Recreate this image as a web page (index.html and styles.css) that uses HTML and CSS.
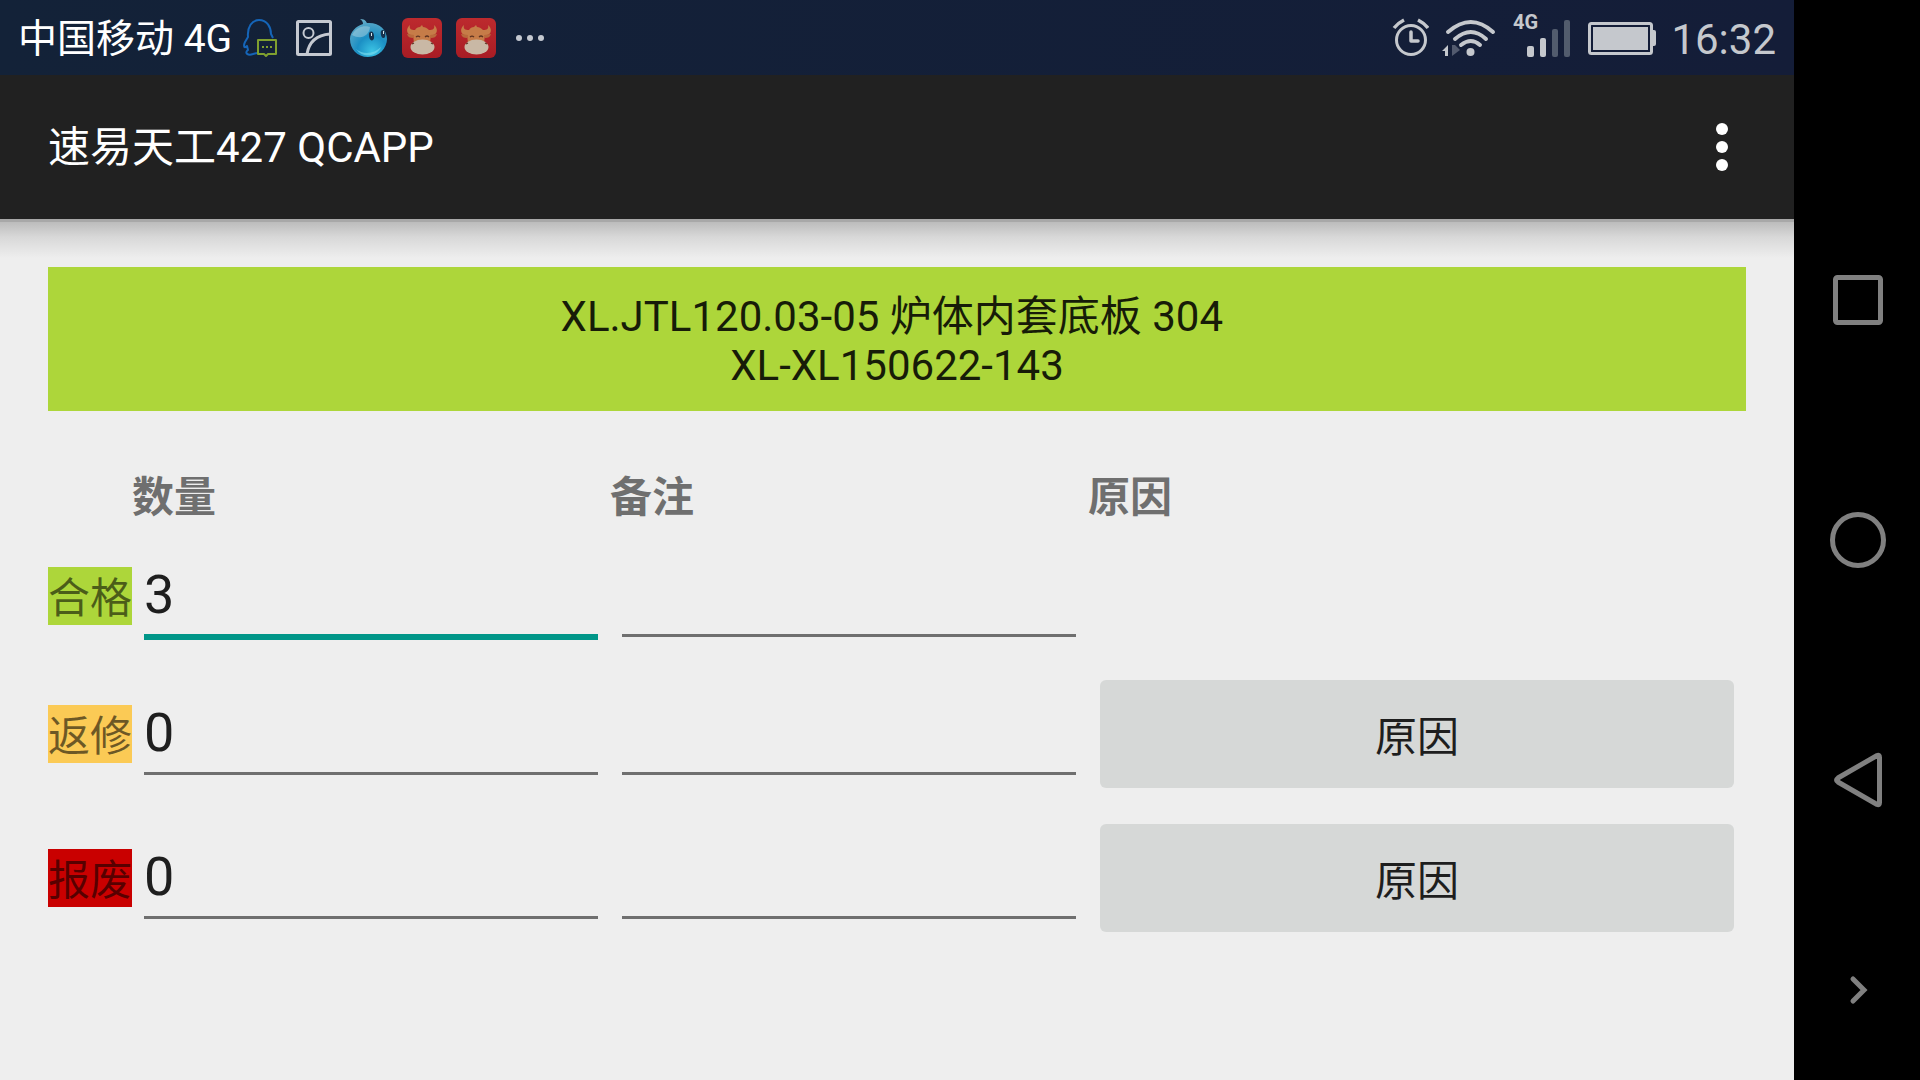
FILE: index.html
```html
<!DOCTYPE html>
<html lang="zh-CN">
<head>
<meta charset="utf-8">
<meta name="viewport" content="width=device-width, initial-scale=1">
<title>速易天工427 QCAPP</title>
<link rel="stylesheet" href="styles.css">
</head>
<body>
<svg width="0" height="0" class="defs" aria-hidden="true">
  <defs>
    <radialGradient id="drop" cx="60%" cy="85%" r="90%">
      <stop offset="0" stop-color="#3cc4e4"/>
      <stop offset=".45" stop-color="#1b8fc4"/>
      <stop offset="1" stop-color="#6aaec8"/>
    </radialGradient>
    <linearGradient id="red" x1="0" y1="0" x2="0" y2="1">
      <stop offset="0" stop-color="#bd2a2e"/>
      <stop offset="1" stop-color="#a81c24"/>
    </linearGradient>
    <symbol id="ox" viewBox="0 0 40 40">
      <rect width="40" height="40" rx="6" fill="url(#red)"/>
      <path d="M8 7c-4 3-4 9 1 10h2l1 8h16l1-8h2c5-1 5-7 1-10 1 4-1 5-5 5-2-2-4-3-6-3l-1-2-2 2c-2 0-4 1-5 3-4 0-6-1-5-5z" fill="#c67c48"/>
      <path d="M5 16l7 1-1 3c-3 0-5-1-6-4zM35 16l-7 1 1 3c3 0 5-1 6-4z" fill="#b86a3c"/>
      <ellipse cx="20.500" cy="29" rx="12" ry="7.500" fill="#c9b8a5"/>
      <path d="M14 19q2-2 4 0M23 19q2-2 4 0" fill="none" stroke="#5e3321" stroke-width="1.200"/>
      <path d="M10 26l2-1M31 26l-2-1" stroke="#5e3321" stroke-width="1.200"/>
    </symbol>
  </defs>
</svg>
<div class="device">
  <div class="screen">
    <div class="status">
      <span class="carrier">中国移动 4G</span>
      <div class="notices">
        <svg class="icon" viewBox="0 0 40 40" fill="none" stroke-linejoin="round">
          <path d="M13 36c-5 2-9-1-5-4l-1-4c-4 4-3-2-2-4l3-5C7 9 12 2 19 2c8 0 12 7 12 14l2 4M13 36l4-1" stroke="#1565b8" stroke-width="2"/>
          <path d="M18 22h18v14H28l-2 2-2-2h-6z" stroke="#7fa02f" stroke-width="2"/>
          <path d="M22 28h2v2h-2zM26 28h2v2h-2zM30 28h2v2h-2z" fill="#7fa02f"/>
        </svg>
        <svg class="icon" viewBox="0 0 40 40" fill="none" stroke="#c5c9d1">
          <rect x="3.500" y="3.500" width="33" height="33" rx="1" stroke-width="3"/>
          <circle cx="14.500" cy="15" r="5" stroke-width="2"/>
          <path d="M13 36C15 24 23 17 36 16" stroke-width="3"/>
        </svg>
        <svg class="icon" viewBox="0 0 40 40">
          <path d="M12 1c6 0 6 3 7 4 12-1 20 7 20 16S31 39 20 39 2 31 2 21C2 14 8 8 15 6c0-2-1-4-3-5z" fill="url(#drop)"/>
          <path d="M4 17c4-9 14-10 18-8-1 9-9 13-18 8z" fill="#b5d6e2" opacity=".45"/>
          <path d="M8 31c7 6 18 5 25-2-3 8-17 13-25 2z" fill="#7fe0ee" opacity=".6"/>
          <ellipse cx="23.500" cy="18" rx="2.500" ry="4.500" fill="#17324d" transform="rotate(-8 23 18)"/>
          <ellipse cx="35" cy="16" rx="2.200" ry="4" fill="#17324d" transform="rotate(-8 35 16)"/>
          <path d="M23 15h1v3h-1zM35 13h1v3h-1z" fill="#d5e8ef"/>
        </svg>
        <svg class="icon"><use href="#ox"/></svg>
        <svg class="icon"><use href="#ox"/></svg>
        <svg class="icon" viewBox="0 0 40 40" fill="#c5c9d1">
          <circle cx="9" cy="20" r="3"/><circle cx="20" cy="20" r="3"/><circle cx="31" cy="20" r="3"/>
        </svg>
      </div>
      <div class="system">
        <svg class="icon" viewBox="0 0 40 40" fill="none" stroke="#c5c8cd">
          <circle cx="22" cy="22" r="14.500" stroke-width="3"/>
          <path d="M22 14v9h7" stroke-width="3.500" stroke-linejoin="round" stroke-linecap="round"/>
          <path d="M5 10q4-5 10-8M39 10q-4-5-10-8" stroke-width="3.500"/>
        </svg>
        <svg class="icon wifi" viewBox="0 0 56 40" fill="none" stroke="#c5c8cd" stroke-linecap="round">
          <path d="M5 14q23-20 45 0" stroke-width="4"/>
          <path d="M12 21q16-14 31 0" stroke-width="4"/>
          <path d="M18 27q10-8 19 0" stroke-width="4"/>
          <circle cx="27.500" cy="34" r="4" fill="#c5c8cd" stroke="none"/>
          <path d="M-1 33l6-6v11H2v-5z" fill="#c5c8cd" stroke="none"/>
          <path d="M9 38V27h3l5 5z" fill="#525a6e" stroke="none"/>
        </svg>
        <svg class="icon signal" viewBox="0 0 60 50" fill="#c5c8cd">
          <text x="0" y="16" class="net">4G</text>
          <rect x="14" y="33" width="7" height="11" rx="2"/>
          <rect x="27" y="25" width="6" height="19" rx="2"/>
          <rect x="39" y="16" width="6" height="28" rx="2" fill="#525c6d"/>
          <rect x="51" y="7" width="6" height="37" rx="2" fill="#525c6d"/>
        </svg>
        <svg class="icon battery" viewBox="0 0 70 40">
          <rect x="2.500" y="5.500" width="62" height="30" rx="2" fill="none" stroke="#c5c8cd" stroke-width="3"/>
          <rect x="6" y="9" width="55" height="23" fill="#c5c8cd"/>
          <path d="M66 12h1q2 0 2 2v12q0 2-2 2h-1z" fill="#c5c8cd"/>
        </svg>
        <span class="clock">16:32</span>
      </div>
    </div>
    <header class="appbar">
      <h1 class="title">速易天工427 QCAPP</h1>
      <button class="menu" type="button" aria-label="菜单">
        <svg class="dots" viewBox="0 0 12 48" fill="#fff">
          <circle cx="6" cy="6" r="6"/><circle cx="6" cy="24" r="6"/><circle cx="6" cy="42" r="6"/>
        </svg>
      </button>
    </header>
    <main class="content">
      <p class="banner">XL.JTL120.03-05 炉体内套底板 304&nbsp;<br>XL-XL150622-143</p>
      <table class="form">
        <colgroup><col class="col-tag"><col class="col-field"><col class="col-field"><col></colgroup>
        <thead>
          <tr><td></td><th scope="col">数量</th><th scope="col">备注</th><th scope="col">原因</th></tr>
        </thead>
        <tbody>
          <tr class="row-short">
            <td><label class="tag tag-ok" for="ok">合格</label></td>
            <td><input class="field field-active" id="ok" type="text" inputmode="numeric" value="3"></td>
            <td><input class="field" type="text" aria-label="合格备注"></td>
            <td></td>
          </tr>
          <tr>
            <td><label class="tag tag-rework" for="rework">返修</label></td>
            <td><input class="field" id="rework" type="text" inputmode="numeric" value="0"></td>
            <td><input class="field" type="text" aria-label="返修备注"></td>
            <td><button class="reason" type="button">原因</button></td>
          </tr>
          <tr>
            <td><label class="tag tag-scrap" for="scrap">报废</label></td>
            <td><input class="field" id="scrap" type="text" inputmode="numeric" value="0"></td>
            <td><input class="field" type="text" aria-label="报废备注"></td>
            <td><button class="reason" type="button">原因</button></td>
          </tr>
        </tbody>
      </table>
    </main>
  </div>
  <nav class="navbar">
    <span></span>
    <button class="key" type="button" aria-label="最近任务">
      <svg class="glyph" viewBox="0 0 60 60"><rect x="7.500" y="7.500" width="45" height="45" rx="2"/></svg>
    </button>
    <button class="key" type="button" aria-label="主屏幕">
      <svg class="glyph" viewBox="0 0 60 60"><circle cx="30" cy="30" r="25.500"/></svg>
    </button>
    <button class="key" type="button" aria-label="返回">
      <svg class="glyph" viewBox="0 0 60 60"><path d="M49 5.500q2.500-1 2.500 2v45q0 3-2.500 2L10 32q-3-2 0-4z"/></svg>
    </button>
    <button class="key" type="button" aria-label="隐藏导航栏">
      <svg class="glyph" viewBox="0 0 60 60"><path d="M25 19l11 11-11 11" stroke-linecap="round"/></svg>
    </button>
  </nav>
</div>
</body>
</html>
```
FILE: styles.css
```css
* { box-sizing: border-box; }

body {
  margin: 0;
  font-family: Roboto, "Noto Sans CJK SC", sans-serif;
  font-size: 42px;
  line-height: 49px;
  color: #1e1e1e;
  background: #000;
}

button {
  font: inherit;
  color: inherit;
  border: 0;
  padding: 0;
  background: none;
}

svg { display: block; }

.defs { position: absolute; }

.device {
  display: flex;
  min-height: 100vh;
}

.screen {
  flex: 1;
  background: #eee;
}

/* System status bar */
.status {
  display: flex;
  align-items: center;
  height: 75px;
  padding: 0 18px;
  background: linear-gradient(90deg, #132238, #141d38);
  color: #c5c8cd;
}

.carrier,
.clock {
  padding-top: 4px;
  white-space: nowrap;
}

.carrier {
  width: 222px;
  font-size: 39px;
  color: #fff;
}

.notices,
.system {
  display: flex;
  align-items: center;
  gap: 14px;
}

.system { margin-left: auto; }

.icon {
  width: 40px;
  height: 40px;
}

.wifi {
  width: 56px;
  overflow: visible;
}

.signal {
  width: 60px;
  height: 50px;
  overflow: visible;
}

.battery { width: 70px; }

.net {
  font-size: 20px;
  font-weight: 700;
}

/* App bar */
.appbar {
  display: flex;
  align-items: center;
  justify-content: space-between;
  height: 144px;
  padding: 0 48px;
  background: #212121;
  color: #fff;
}

.title {
  margin: 0;
  font-size: 42px;
  font-weight: 400;
}

.menu {
  display: flex;
  justify-content: center;
  width: 48px;
}

.dots {
  width: 12px;
  height: 48px;
}

/* Form */
.content {
  padding: 48px;
  background: linear-gradient(#a8a8a8 3px, #bcbcbc 3px, #d8d8d8 18px, #eee 39px) no-repeat 0 0 / 100% 39px;
}

.banner {
  margin: 0;
  padding: 25px 24px 21px;
  background: #add63a;
  color: #171c08;
  text-align: center;
}

.form {
  width: 100%;
  margin-top: 55px;
  table-layout: fixed;
  border-collapse: collapse;
}

.col-tag { width: 84px; }
.col-field { width: 478px; }

.form td,
.form th {
  padding: 0;
  vertical-align: top;
}

.form th {
  height: 58px;
  padding-top: 7px;
  line-height: 49px;
  text-align: left;
  color: #6f6f6f;
}

.form tbody tr { height: 144px; }
.form tbody .row-short { height: 138px; }

.tag {
  display: block;
  height: 58px;
  margin-top: 43px;
  padding-top: 7px;
  color: rgba(0, 0, 0, .56);
  white-space: nowrap;
}

.tag-ok { background: #add63a; }
.tag-rework { background: #fbca55; }
.tag-scrap { background: #c90000; }

.field {
  display: block;
  width: calc(100% - 24px);
  height: 77px;
  margin: 36px 12px 0;
  padding: 0 0 6px;
  border: 0;
  border-bottom: 3px solid #6f6f6f;
  outline: 0;
  background: none;
  font: 54px/68px Roboto, "Noto Sans CJK SC", sans-serif;
  color: #1e1e1e;
}

.field-active {
  height: 80px;
  border-bottom: 6px solid #009688;
}

.reason {
  display: block;
  width: calc(100% - 24px);
  height: 108px;
  margin: 18px 12px;
  padding-top: 6px;
  border-radius: 6px;
  background: #d6d8d7;
}

/* System navigation keys */
.navbar {
  display: grid;
  grid-template-rows: 3fr 4fr 4fr 4fr 3fr;
  width: 126px;
  padding-left: 2px;
  background: #000;
}

.key {
  display: flex;
  align-items: center;
  justify-content: center;
}

.glyph {
  width: 60px;
  height: 60px;
  fill: none;
  stroke: #808080;
  stroke-width: 5;
}
```
